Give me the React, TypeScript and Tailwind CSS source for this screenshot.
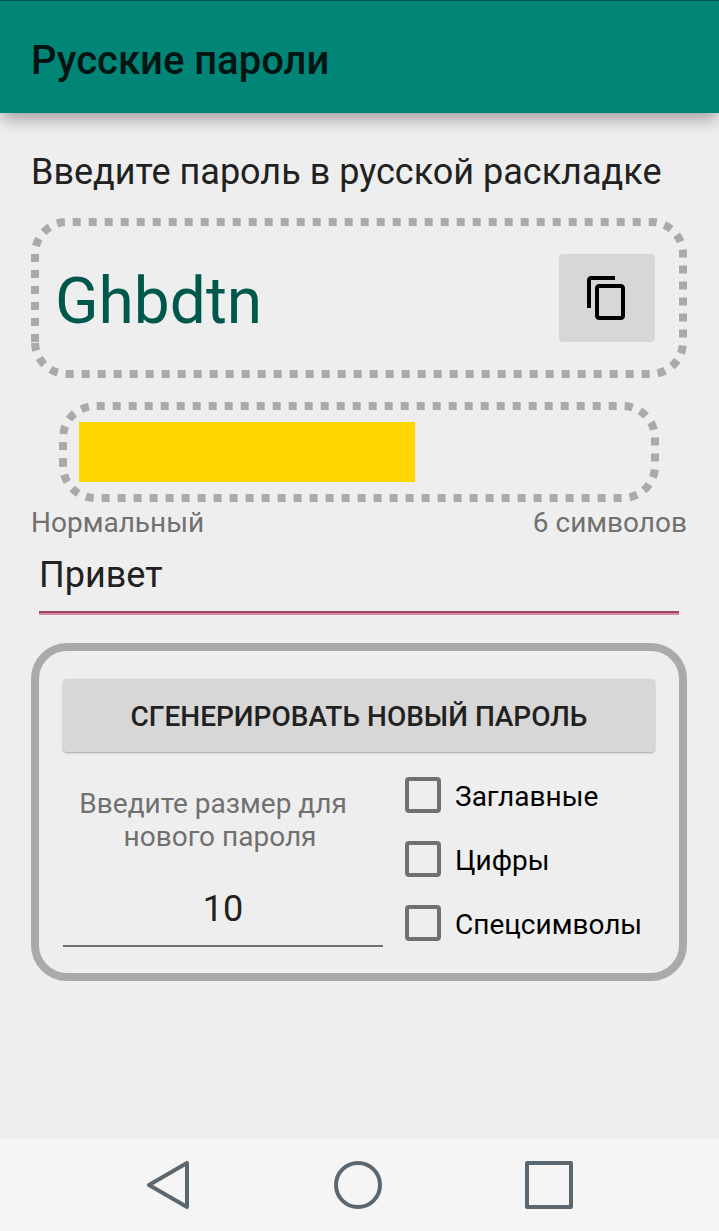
import { useId, useState } from "react";
import type { ReactNode } from "react";

// Same physical keys, typed with the English layout switched on.
const KEYS: Record<string, string> = {
  й: "q", ц: "w", у: "e", к: "r", е: "t", н: "y", г: "u", ш: "i", щ: "o", з: "p", х: "[", ъ: "]",
  ф: "a", ы: "s", в: "d", а: "f", п: "g", р: "h", о: "j", л: "k", д: "l", ж: ";", э: "'",
  я: "z", ч: "x", с: "c", м: "v", и: "b", т: "n", ь: "m", б: ",", ю: ".", ё: "`",
};

function toLatinKeys(text: string) {
  return Array.from(text)
    .map((letter) => {
      const key = KEYS[letter.toLowerCase()] ?? letter;
      return letter === letter.toLowerCase() ? key : key.toUpperCase();
    })
    .join("");
}

// Dashed rounded outline; the dash pattern starts at the foot of the left side and runs clockwise.
function DashedOutline({ height }: { height: number }) {
  const clip = useId();
  const seam = height - 36;
  const lead = seam - 36 + 16 * Math.PI;
  return (
    <svg
      className="pointer-events-none absolute inset-0 h-full w-full"
      fill="none"
      stroke="#aaaaaa"
      strokeWidth="8"
      strokeDasharray="8 8"
      aria-hidden="true"
    >
      <clipPath id={clip}>
        <rect x="36" y="0" width="100%" height="100%" />
        <rect x="0" y={seam} width="36" height="36" />
      </clipPath>
      <path d={`M4 ${seam}V36A32 32 0 0 1 36 4`} />
      <g clipPath={`url(#${clip})`}>
        <rect
          x="4"
          y="4"
          rx="32"
          className="h-[calc(100%-8px)] w-[calc(100%-8px)]"
          strokeDashoffset={lead}
        />
      </g>
    </svg>
  );
}

function CheckRow({ children }: { children: ReactNode }) {
  return (
    <label className="flex h-16 items-center gap-[14px] text-[28px] leading-8 text-black">
      <input
        type="checkbox"
        className="h-9 w-9 shrink-0 appearance-none rounded border-4 border-[#707070] checked:bg-[#008577]"
      />
      <span className="pt-1">{children}</span>
    </label>
  );
}

export default function App() {
  const [password, setPassword] = useState("Привет");
  const [size, setSize] = useState("10");
  const fill = Math.min(password.length * 10, 100);

  return (
    <div className="flex min-h-screen flex-col bg-[#eeeeee] font-['Roboto',sans-serif] text-[#212121]">
      <header className="relative flex h-[113px] items-center border-t border-[#00574b] bg-[#008577] pt-2 pl-[31px] shadow-[0_8px_16px_-2px_rgba(0,0,0,0.34)]">
        <h1 className="text-[40px] leading-[48px] font-medium text-[#001411]">Русские пароли</h1>
      </header>

      <main className="flex-1 pt-[38px] pr-8 pl-[31px]">
        <label htmlFor="password" className="block text-[36px] leading-[42px]">
          Введите пароль в русской раскладке
        </label>

        <section className="relative mt-[25px] flex h-40 items-center justify-between pr-8 pl-6">
          <DashedOutline height={160} />
          <output className="pt-2 text-[64px] leading-[76px] text-[#00574b]">{toLatinKeys(password)}</output>
          <button
            type="button"
            aria-label="Копировать"
            className="flex h-[88px] w-24 items-center justify-center rounded bg-[#d7d7d7]"
          >
            <svg className="h-12 w-12" viewBox="0 0 24 24" fill="#000000" aria-hidden="true">
              <path d="M16 1H4c-1.100 0-2 .9-2 2v14h2V3h12V1zm3 4H8c-1.100 0-2 .9-2 2v14c0 1.100.9 2 2 2h11c1.100 0 2-.9 2-2V7c0-1.100-.9-2-2-2zm0 16H8V7h11v14z" />
            </svg>
          </button>
        </section>

        <section className="relative mx-7 mt-6 h-[100px] p-5">
          <DashedOutline height={100} />
          <div className="h-full bg-[#ffd700]" style={{ width: `${fill}%` }} />
        </section>

        <div className="mt-[5px] flex justify-between text-[28px] leading-8 text-[#707070]">
          <span>Нормальный</span>
          <span>{password.length} символов</span>
        </div>

        <div className="mx-2 mt-[7px] border-b-2 border-[#d987a6]">
          <input
            id="password"
            type="text"
            value={password}
            onChange={(event) => setPassword(event.target.value)}
            className="block h-[67px] w-full border-b-2 border-[#9c4665] bg-transparent pb-2 text-[36px] leading-[42px] outline-none"
          />
        </div>

        <section className="mt-7 rounded-[36px] border-8 border-[#aaaaaa] px-6 pt-7 pb-[18px]">
          <button
            type="button"
            className="h-[73px] w-full rounded bg-[#d7d7d7] pt-[2px] text-[28px] leading-8 font-medium uppercase shadow-[0_1px_2px_rgba(0,0,0,0.3)]"
          >
            Сгенерировать новый пароль
          </button>
          <div className="mt-[11px] flex gap-[22px]">
            <div className="flex w-80 flex-col pt-6">
              <label
                htmlFor="size"
                className="pr-[6px] text-center text-[28px] leading-[33px] whitespace-pre text-[#707070]"
              >
                {"Введите размер для  \nнового пароля"}
              </label>
              <input
                id="size"
                type="text"
                inputMode="numeric"
                value={size}
                onChange={(event) => setSize(event.target.value)}
                className="mt-[27px] h-[67px] w-full border-b-2 border-[#707070] bg-transparent pb-2 text-center text-[36px] leading-[42px] outline-none"
              />
            </div>
            <div className="flex-1">
              <CheckRow>Заглавные</CheckRow>
              <CheckRow>Цифры</CheckRow>
              <CheckRow>Спецсимволы</CheckRow>
            </div>
          </div>
        </section>
      </main>

      <nav className="flex h-[92px] items-center justify-center gap-[143px] bg-[#f5f5f5] pr-[3px]">
        <button type="button" aria-label="Назад" className="h-12 w-12">
          <svg viewBox="0 0 48 48" fill="none" stroke="#5b6770" strokeWidth="4" strokeLinejoin="round" aria-hidden="true">
            <path d="M44 2V46L6 24Z" />
          </svg>
        </button>
        <button type="button" aria-label="Домой" className="h-12 w-12">
          <svg viewBox="0 0 48 48" fill="none" stroke="#5b6770" strokeWidth="4" aria-hidden="true">
            <circle cx="24" cy="24" r="22" />
          </svg>
        </button>
        <button type="button" aria-label="Недавние" className="h-12 w-12">
          <svg viewBox="0 0 48 48" fill="none" stroke="#5b6770" strokeWidth="4" strokeLinejoin="round" aria-hidden="true">
            <rect x="2" y="2" width="44" height="44" />
          </svg>
        </button>
      </nav>
    </div>
  );
}
